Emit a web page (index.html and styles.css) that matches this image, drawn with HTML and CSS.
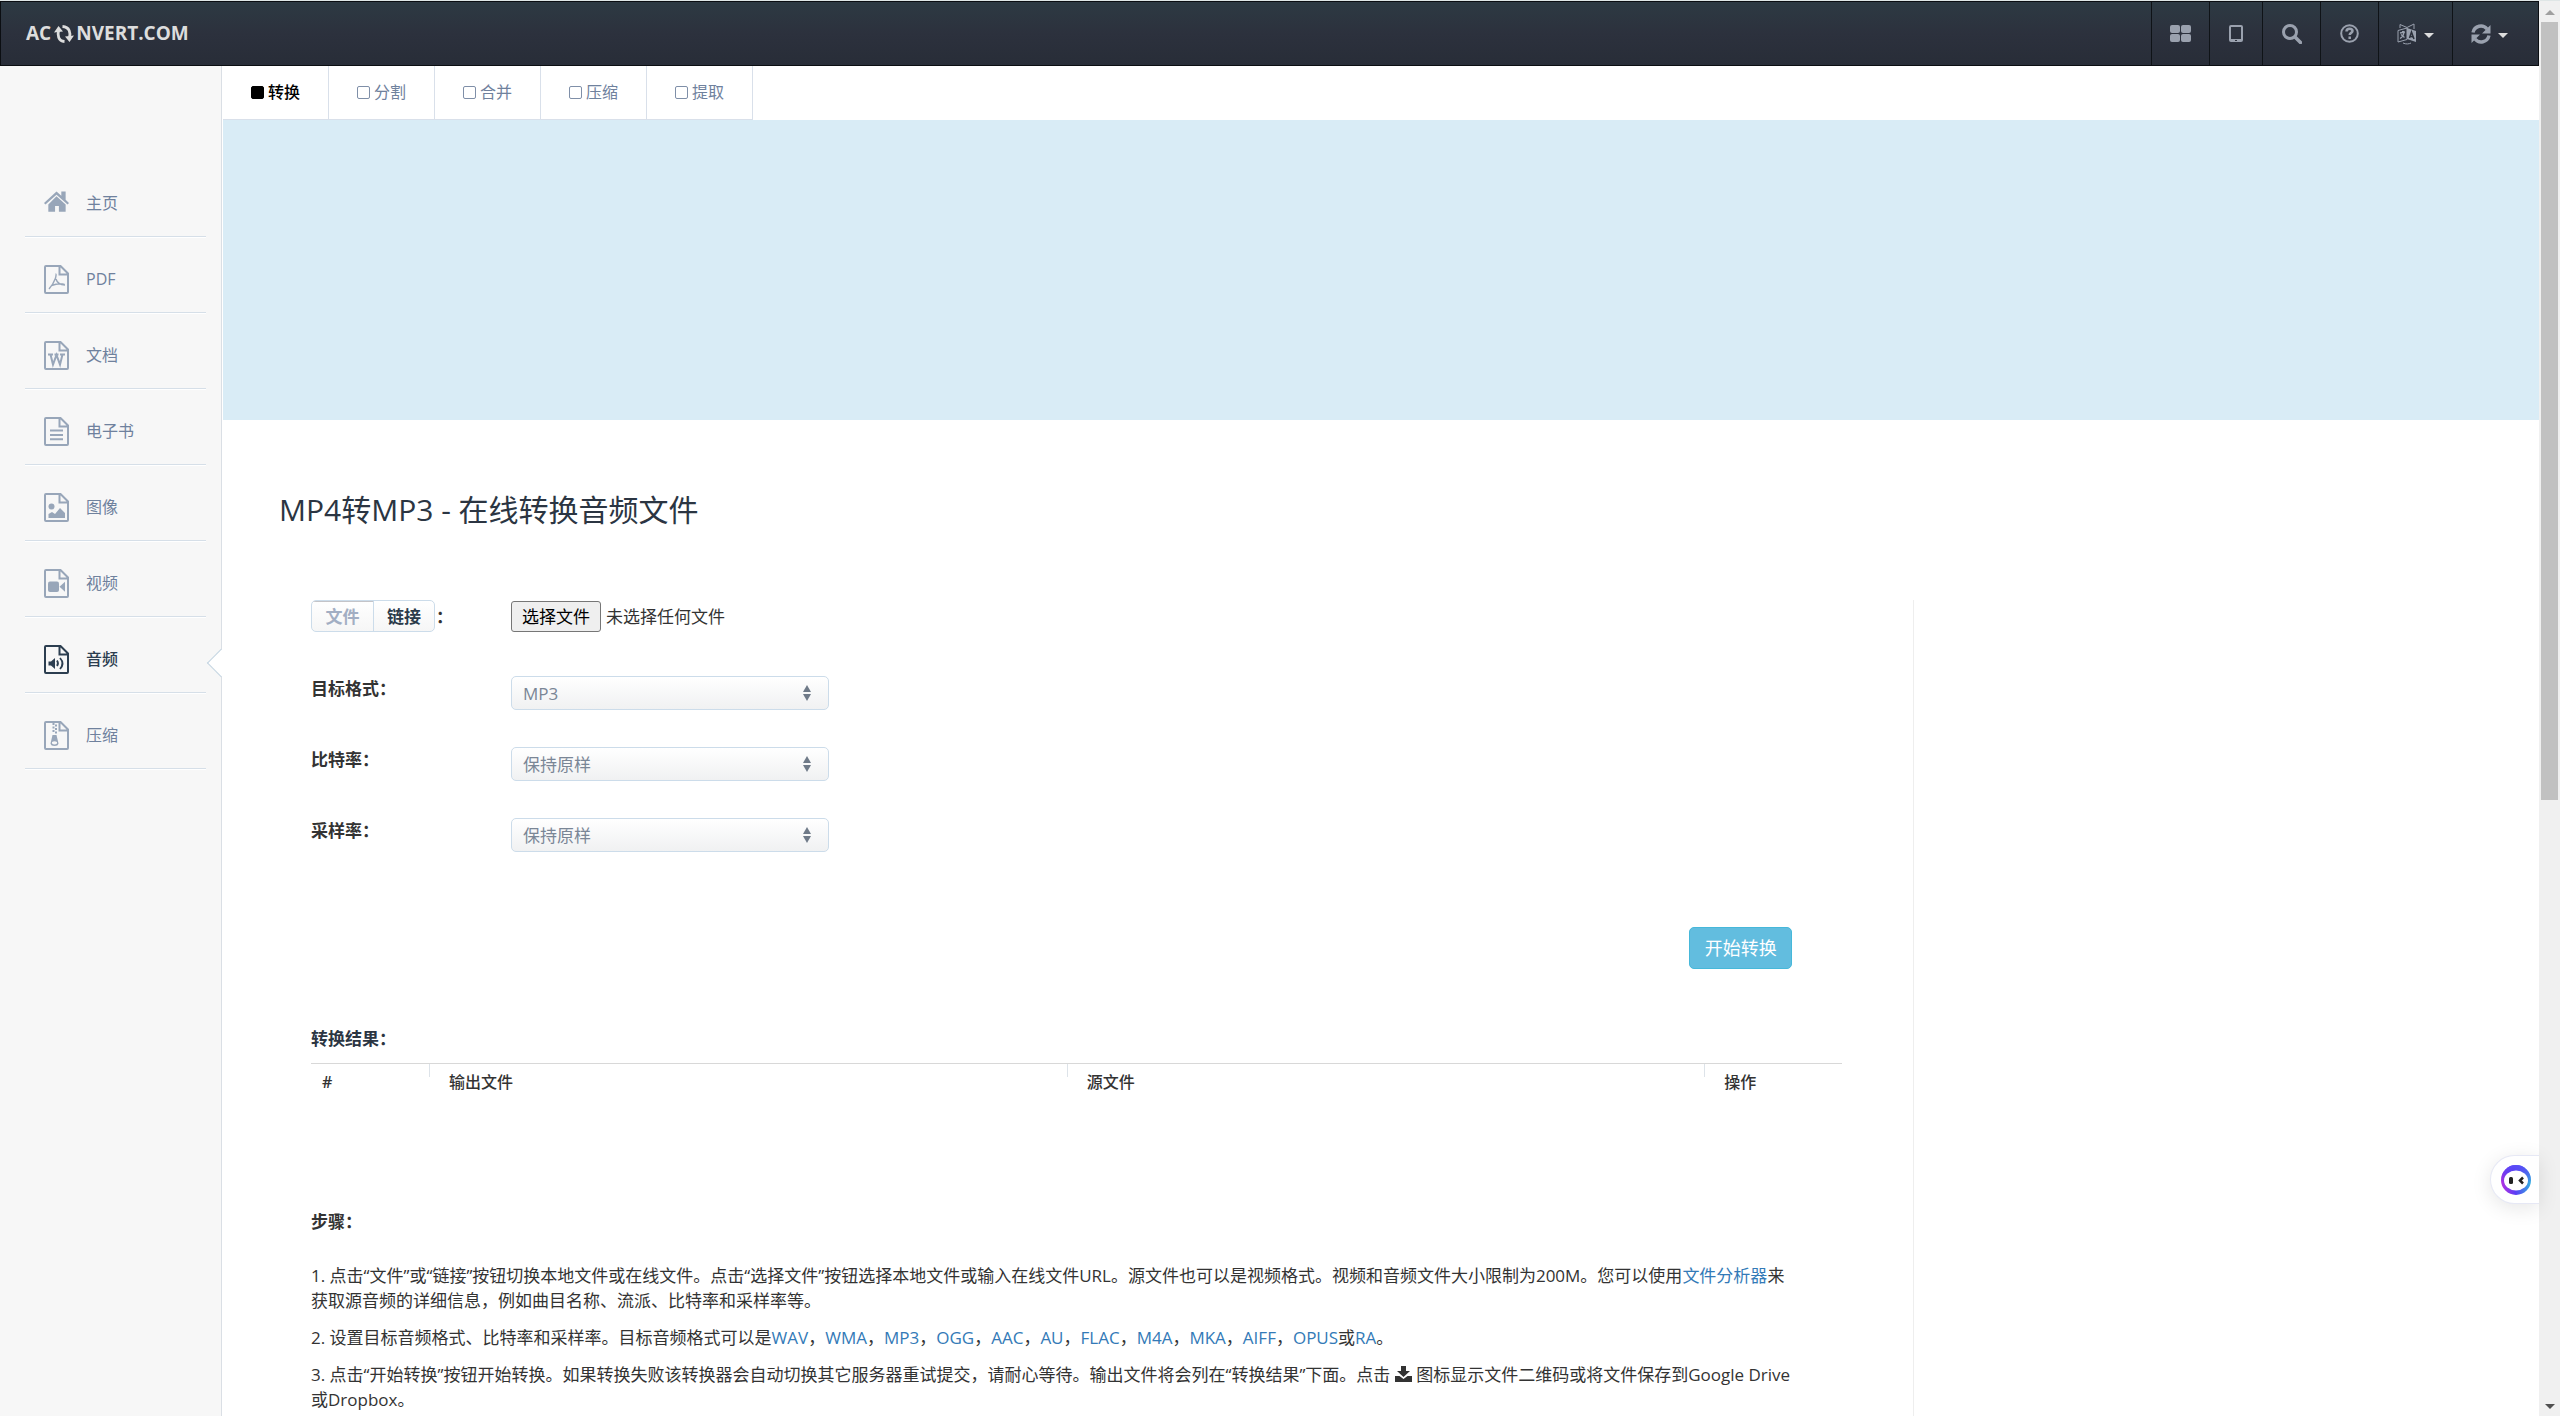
FILE: index.html
```html
<!DOCTYPE html>
<html lang="zh-CN">
<head>
<meta charset="utf-8">
<title>MP4转MP3 - 在线转换音频文件</title>
<link rel="stylesheet" href="styles.css">
</head>
<body>
<svg class="sprite" aria-hidden="true">
  <symbol id="doc" viewBox="0 0 25 29"><path d="M2 1h14.500l7.500 7.500V27a1 1 0 0 1-1 1H2a1 1 0 0 1-1-1V2a1 1 0 0 1 1-1zM15.500 1v8.500H24" fill="none" stroke="currentColor" stroke-width="2"/></symbol>
</svg>
<div class="window">
<div class="app">
  <header class="navbar">
    <a class="brand" href="#">AC<svg class="brand-icon" viewBox="0 0 20 18" fill="none" stroke="currentColor" stroke-width="2.800"><path d="M10.500 16.500C4 16 3.500 10 4.500 5.500M8.500 1.500C16 2 16.500 8 15.500 12.500"/><path d="M0 7.500L4.500 1l4.500 5.500zM20 10.500L15.500 17 11 11.500z" fill="currentColor" stroke="none"/></svg>NVERT.COM</a>
    <nav class="tools" aria-label="工具">
      <a class="tool tool-wide" href="#" aria-label="全部工具"><svg width="21" height="18" viewBox="0 0 21 18" fill="currentColor"><rect width="10" height="8" rx="2"/><rect x="11" width="10" height="8" rx="2"/><rect y="9" width="10" height="8" rx="2"/><rect x="11" y="9" width="10" height="8" rx="2"/></svg></a>
      <a class="tool tool-slim" href="#" aria-label="移动版"><svg width="14" height="18" viewBox="0 0 14 18"><path fill="currentColor" fill-rule="evenodd" d="M2 0h10a2 2 0 0 1 2 2v13a2 2 0 0 1-2 2H2a2 2 0 0 1-2-2V2a2 2 0 0 1 2-2zm0 2v12h10V2zM6 15v1h2v-1z"/></svg></a>
      <a class="tool tool-wide" href="#" aria-label="搜索"><svg width="20" height="20" viewBox="0 0 20 20" fill="none" stroke="currentColor"><circle cx="8" cy="8" r="6.500" stroke-width="3"/><path d="M13 13l5.500 5.500" stroke-width="3.500" stroke-linecap="round"/></svg></a>
      <a class="tool tool-wide" href="#" aria-label="帮助"><svg width="19" height="19" viewBox="0 0 19 19" fill="none" stroke="currentColor"><circle cx="9.500" cy="9.500" r="8.300" stroke-width="2"/><path d="M6.500 7.500c0-4 6-3.500 6-.5 0 2-2.800 1.800-2.800 4" stroke-width="2.500"/><path d="M9.700 12.500v2.500" stroke-width="2.500"/></svg></a>
      <a class="tool tool-menu" href="#" aria-label="语言"><svg width="20" height="22" viewBox="0 0 20 22"><path fill="currentColor" d="M10 5l9 3v11l-9-3z"/><path d="M1 7.500L10 5v11.500L1 19zM3 5V1.500l7 3 7-3.500v5M6 20c3 1.500 6 1 8 0" fill="none" stroke="currentColor"/><path d="M3 10l5-1M5.500 8l1 1.500M7 9.500c-.5 3-2 5-4 6M4 11.500l3.500 3" fill="none" stroke="currentColor" stroke-width="1.300"/><path d="M12.500 15l2-6 2.500 7M13 13l3 1" fill="none" stroke="#2b303b" stroke-width="1.500"/></svg><span class="caret"></span></a>
      <a class="tool tool-last" href="#" aria-label="刷新"><svg width="20" height="20" viewBox="0 0 20 20"><g fill="none" stroke="currentColor" stroke-width="3.400"><path d="M2 8.500C3.500 1.500 12 0 16 5M18 11.500C16.500 18.500 8 20 4 15"/></g><path fill="currentColor" d="M19.500 1v8.500H11zM.5 19v-8.500H9z"/></svg><span class="caret"></span></a>
    </nav>
  </header>
  <div class="columns">
    <nav class="sidebar" aria-label="分类">
      <a class="side-item" href="#"><svg class="side-icon" viewBox="0 0 26 29" fill="currentColor"><path d="M0 14L13 2l5 4.500V2h4.500v8.500L26 14l-1.500 1.500L13 5.500 1.500 15.500z"/><path d="M13 7l9.500 8.500V23h-7v-6h-4v6h-7v-7.500z"/></svg>主页</a>
      <a class="side-item" href="#"><svg class="side-icon" viewBox="0 0 25 29"><use href="#doc"/><path d="M11.500 9c1.500 0 0 7.500-6.500 15M12 14c1 3.500 4 6 9 6M7.500 20.500c4-1.500 9-2.500 13-1" fill="none" stroke="currentColor" stroke-width="1.400"/></svg>PDF</a>
      <a class="side-item" href="#"><svg class="side-icon" viewBox="0 0 25 29"><use href="#doc"/><path d="M4 13.500h5M10.500 13.500h4M16 13.500h5M6.500 13.500l2.500 10L12.500 14 16 23.500l2.500-10" fill="none" stroke="currentColor" stroke-width="2"/></svg>文档</a>
      <a class="side-item" href="#"><svg class="side-icon" viewBox="0 0 25 29"><use href="#doc"/><path d="M6 13.500h13M6 18h13M6 22.300h13" stroke="currentColor" stroke-width="2"/></svg>电子书</a>
      <a class="side-item" href="#"><svg class="side-icon" viewBox="0 0 25 29"><use href="#doc"/><circle cx="7.500" cy="13.500" r="3" fill="currentColor"/><path fill="currentColor" d="M4.500 25v-4l3.500-2 3 2 5-6 5 5v5z"/></svg>图像</a>
      <a class="side-item" href="#"><svg class="side-icon" viewBox="0 0 25 29"><use href="#doc"/><rect x="4" y="12.500" width="11" height="10.500" rx="2" fill="currentColor"/><path fill="currentColor" d="M15.500 17.800l5.500-5v10z"/></svg>视频</a>
      <a class="side-item is-active" href="#"><svg class="side-icon" viewBox="0 0 25 29"><use href="#doc"/><path fill="currentColor" d="M4.500 16.500H7l4-3.500v11l-4-3.500H4.500z"/><path d="M13 15.500q2 3 0 5.500M16 13q5 5.500 0 11" fill="none" stroke="currentColor" stroke-width="1.800"/></svg>音频</a>
      <a class="side-item" href="#"><svg class="side-icon" viewBox="0 0 25 29"><use href="#doc"/><path d="M9.500 2v10M12 3.500v10" stroke="currentColor" stroke-width="2" stroke-dasharray="2 1.500"/><path fill="currentColor" fill-rule="evenodd" d="M8.500 14h4l2 8.500q-.5 2.500-4 2.500t-4-2.500zM8 21v1.500q2.500 2 5 0V21q-2.500-1.500-5 0z"/></svg>压缩</a>
    </nav>
    <main class="content">
      <nav class="tabs" aria-label="操作类型">
        <a class="tab is-active" href="#"><span class="tab-mark"></span>转换</a>
        <a class="tab" href="#"><span class="tab-mark"></span>分割</a>
        <a class="tab" href="#"><span class="tab-mark"></span>合并</a>
        <a class="tab" href="#"><span class="tab-mark"></span>压缩</a>
        <a class="tab" href="#"><span class="tab-mark"></span>提取</a>
      </nav>
      <div class="banner"></div>
      <div class="page">
        <h1 class="title">MP4转MP3 - 在线转换音频文件</h1>
        <div class="grid">
          <div class="primary">
            <form class="form">
              <div class="field field-source">
                <div class="source"><span class="switch"><button class="switch-btn is-on" type="button">文件</button><button class="switch-btn" type="button">链接</button></span><span>：</span></div>
                <div class="picker"><button class="pick" type="button">选择文件</button><span>未选择任何文件</span></div>
              </div>
              <div class="field">
                <label class="label" for="format">目标格式：</label>
                <div class="select-box"><select id="format" class="select"><option>MP3</option></select></div>
              </div>
              <div class="field">
                <label class="label" for="bitrate">比特率：</label>
                <div class="select-box"><select id="bitrate" class="select"><option>保持原样</option></select></div>
              </div>
              <div class="field">
                <label class="label" for="sample">采样率：</label>
                <div class="select-box"><select id="sample" class="select"><option>保持原样</option></select></div>
              </div>
              <div class="actions"><button class="submit" type="button">开始转换</button></div>
            </form>
            <h2 class="subtitle">转换结果：</h2>
            <table class="results">
              <thead><tr><th class="col-index">#</th><th>输出文件</th><th>源文件</th><th class="col-action">操作</th></tr></thead>
            </table>
            <section class="steps">
              <h2 class="steps-title">步骤：</h2>
              <p>1. 点击“文件”或“链接”按钮切换本地文件或在线文件。点击“选择文件”按钮选择本地文件或输入在线文件URL。源文件也可以是视频格式。视频和音频文件大小限制为200M。您可以使用<a href="#">文件分析器</a>来获取源音频的详细信息，例如曲目名称、流派、比特率和采样率等。</p>
              <p>2. 设置目标音频格式、比特率和采样率。目标音频格式可以是<a href="#">WAV</a>，<a href="#">WMA</a>，<a href="#">MP3</a>，<a href="#">OGG</a>，<a href="#">AAC</a>，<a href="#">AU</a>，<a href="#">FLAC</a>，<a href="#">M4A</a>，<a href="#">MKA</a>，<a href="#">AIFF</a>，<a href="#">OPUS</a>或<a href="#">RA</a>。</p>
              <p>3. 点击“开始转换”按钮开始转换。如果转换失败该转换器会自动切换其它服务器重试提交，请耐心等待。输出文件将会列在“转换结果”下面。点击 <svg class="download" viewBox="0 0 17 16" fill="currentColor"><path d="M6 0h5v5h4l-6.500 6L2 5h4z"/><path d="M0 10h4.500l4 3 4-3H17v6H0z"/></svg> 图标显示文件二维码或将文件保存到Google Drive或Dropbox。</p>
            </section>
          </div>
          <aside class="secondary"></aside>
        </div>
      </div>
    </main>
  </div>
  <button class="assistant" type="button" aria-label="助手"><svg width="30" height="30" viewBox="0 0 30 30"><defs><linearGradient id="ring" x1="0" y1=".7" x2="1" y2=".6"><stop offset="0" stop-color="#b832e0"/><stop offset=".45" stop-color="#5b3cf5"/><stop offset="1" stop-color="#31b0e0"/></linearGradient><linearGradient id="cap" x1="0" y1="0" x2="0" y2="1"><stop offset="0" stop-color="#5a4df8"/><stop offset=".6" stop-color="#5a30f0" stop-opacity="0"/></linearGradient></defs><circle cx="15" cy="15" r="15" fill="url(#ring)"/><circle cx="15" cy="15" r="15" fill="url(#cap)"/><ellipse cx="15" cy="15.500" rx="12" ry="10" fill="#fff"/><rect x="8" y="12" width="4" height="7" rx="1.500" fill="#222"/><path d="M22 12.500l-3 3 3 3" fill="none" stroke="#222" stroke-width="2.500"/></svg></button>
</div>
<div class="scrollbar" aria-hidden="true"><span class="arrow-up"></span><span class="thumb"></span><span class="arrow-down"></span></div>
</div>
</body>
</html>
```
FILE: styles.css
```css
* { box-sizing: border-box; }
body {
  margin: 0;
  background: #fff;
  color: #333;
  font: 400 17px/25px "Open Sans", "Noto Sans CJK SC", sans-serif;
}
a { color: #337ab7; text-decoration: none; }
button, select { font: inherit; }
.sprite { display: none; }
.window { display: flex; height: 100vh; overflow: hidden; border-top: 1px solid #dfe6e6; }
.app { position: relative; flex: 1; min-width: 0; display: flex; flex-direction: column; }

.navbar {
  flex: none;
  display: flex;
  justify-content: space-between;
  align-items: stretch;
  height: 65px;
  border: 1px solid #0b0e12;
  background: linear-gradient(#2d3a43, #2c313d 50%, #282d38);
}
.brand { display: flex; align-items: center; padding-left: 25px; color: #ddd; font-size: 19px; font-weight: 700; }
.brand-icon { width: 20px; height: 18px; margin: 0 2px 0 3px; }
.tools { display: flex; }
.tool { display: flex; align-items: center; justify-content: center; gap: 7px; border-left: 1px solid #0f1317; color: #9aa1ae; }
.tool-wide { width: 58px; }
.tool-slim { width: 53px; }
.tool-menu { width: 74px; }
.tool-last { width: 86px; padding-right: 12px; }
.caret { border: 5px solid transparent; border-top-color: #ddd; border-bottom: 0; margin-top: 4px; }

.columns { flex: 1; min-height: 0; display: flex; }
.sidebar { flex: none; width: 222px; padding: 95px 15px 0 25px; border-right: 1px solid #dadfe5; background: #f7f7f7; }
.side-item {
  position: relative;
  display: flex;
  align-items: center;
  gap: 17px;
  height: 76px;
  padding: 9px 0 0 19px;
  border-bottom: 1px solid #d6dfe8;
  box-shadow: 0 1px #fff;
  color: #6f819d;
  font-size: 16px;
}
.side-icon { width: 25px; height: 29px; color: #98a6b9; }
.side-item.is-active, .side-item.is-active .side-icon { color: #2c3e50; }
.side-item.is-active { font-weight: 500; }
.side-item.is-active::after {
  content: "";
  position: absolute;
  right: -25px;
  top: 36px;
  width: 19px;
  height: 19px;
  border: 1px solid #c5d5e2;
  border-width: 0 0 1px 1px;
  background: linear-gradient(45deg, #fff 50%, transparent 50%);
  transform: rotate(45deg);
}

.content { flex: 1; min-width: 0; padding-left: 1px; overflow: hidden; }
.tabs { display: flex; }
.tab {
  display: flex;
  align-items: center;
  justify-content: center;
  gap: 4px;
  width: 106px;
  height: 54px;
  border-right: 1px solid #d9e0ea;
  border-bottom: 1px solid #d9e0ea;
  color: #6f819d;
  font-size: 16px;
}
.tab-mark { width: 13px; height: 13px; border: 1px solid #7f8fa8; border-radius: 2px; }
.tab.is-active { color: #000; font-weight: 500; }
.tab.is-active .tab-mark { background: #000; border-color: #000; }
.banner { height: 300px; background: #d9ecf6; }

.page { padding: 70px 81px 0 56px; }
.title { margin: 0; color: #2b3542; font-size: 30px; font-weight: 400; line-height: 40px; }
.grid { display: grid; grid-template-columns: 3fr 1fr; margin-top: 70px; }
.primary { padding: 0 71px 0 32px; }
.secondary { border-left: 1px solid #eee; }
.form { display: flex; flex-direction: column; }
.field { display: grid; grid-template-columns: 200px 1fr; height: 71px; }
.field-source { height: 76px; }
.source { display: flex; align-items: center; height: 32px; gap: 1px; font-weight: 700; }
.switch { display: flex; height: 32px; border: 1px solid #ccdcea; border-radius: 5px; background: linear-gradient(#fff, #f6f6f6); overflow: hidden; }
.switch-btn { width: 60px; padding: 0; border: 0; background: none; color: #2b3a4a; font-weight: 700; }
.switch-btn.is-on { width: 62px; border-right: 1px solid #ccdcea; box-shadow: inset 0 1px #c4c4c8; color: #a2aec3; }
.picker { display: flex; align-items: center; gap: 5px; height: 32px; }
.pick { width: 90px; height: 31px; padding: 0; border: 1px solid #767676; border-radius: 3px; background: #efefef; color: #000; }
.label { font-weight: 700; }
.select-box { position: relative; width: 318px; height: 34px; }
.select {
  width: 100%;
  height: 34px;
  padding: 0 11px;
  appearance: none;
  border: 1px solid #ccdcea;
  border-radius: 5px;
  background: linear-gradient(#fff, #f0f1f2);
  color: #7a8696;
}
.select-box::before, .select-box::after { content: ""; position: absolute; right: 18px; border: 4px solid transparent; }
.select-box::before { top: 9px; border-bottom: 7px solid #6f7a88; border-top: 0; }
.select-box::after { top: 18px; border-top: 7px solid #6f7a88; border-bottom: 0; }
.actions { display: flex; justify-content: flex-end; padding: 38px 50px 0 0; }
.submit { width: 103px; height: 42px; padding: 0; border: 1px solid #46b8da; border-radius: 5px; background: #62bddf; color: #fff; font-size: 18px; }
.subtitle { margin: 57px 0 0; color: #2b3542; font-size: 17px; font-weight: 700; line-height: 25px; }
.results { width: 100%; margin-top: 12px; border-collapse: collapse; table-layout: fixed; border-top: 1px solid #d8d8d8; }
.results th {
  padding: 6px 20px;
  background: linear-gradient(#dde3e9, #dde3e9) left top / 1px 13px no-repeat;
  font-size: 16px;
  font-weight: 500;
  text-align: left;
}
.results .col-index { width: 118px; padding-left: 11px; background: none; font-weight: 600; }
.results .col-action { width: 138px; }
.steps { padding: 108px 46px 0 0; }
.steps-title { margin: 0 0 29px; font-size: 17px; font-weight: 700; line-height: 25px; }
.steps p { margin: 0 0 12px; }
.download { width: 17px; height: 16px; vertical-align: -1px; }

.assistant {
  position: absolute;
  right: 0;
  bottom: 212px;
  width: 49px;
  height: 49px;
  display: flex;
  align-items: center;
  padding: 0 0 0 10px;
  border: 1px solid #e6e8f5;
  border-right: 0;
  border-radius: 25px 0 0 25px;
  background: #fff;
  box-shadow: 0 4px 20px rgba(0, 0, 0, .1);
}

.scrollbar { flex: none; display: flex; flex-direction: column; align-items: center; width: 21px; background: #f0f0f0; }
.arrow-up { margin: 9px 0 7px; border: 5px solid transparent; border-bottom-color: #a0a0a0; border-top: 0; }
.thumb { width: 17px; height: 55%; background: #c1c1c1; }
.arrow-down { margin: auto 0 7px; border: 5px solid transparent; border-top-color: #505050; border-bottom: 0; }
```
